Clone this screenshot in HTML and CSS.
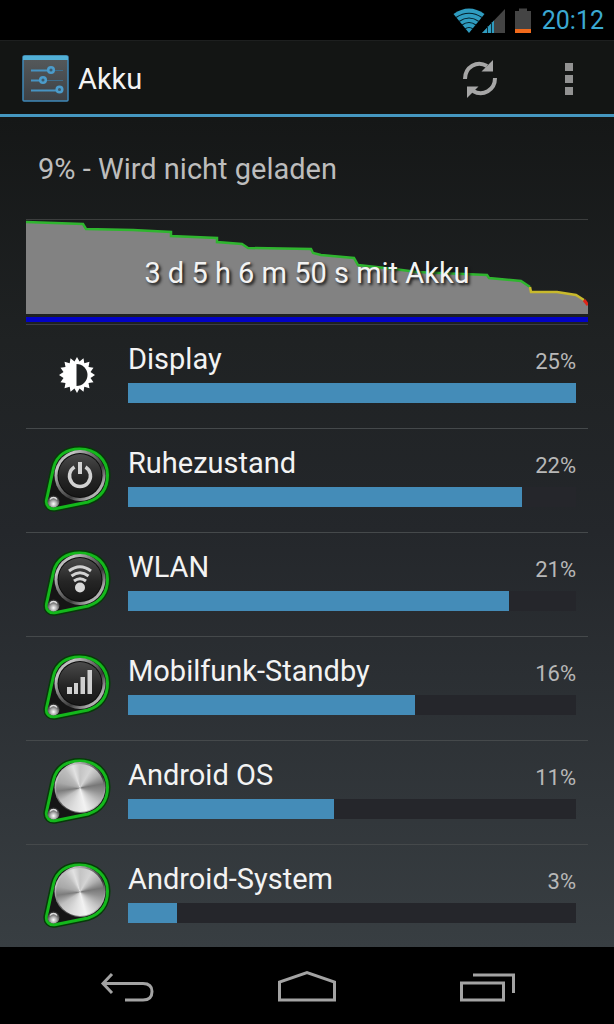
FILE: index.html
```html
<!DOCTYPE html>
<html lang="de">
<head>
	<meta charset="UTF-8">
	<meta name="viewport" content="width=device-width, initial-scale=1">
	<title>Akku</title>
	<link rel="stylesheet" href="styles.css">
</head>
<body>
	<!-- shared shapes -->
	<svg class="defs" width="0" height="0" aria-hidden="true">
		<defs>
			<linearGradient id="ring" x1="0" y1="0" x2="1" y2="1">
				<stop offset="0" stop-color="#8a8a8a"/>
				<stop offset=".2" stop-color="#c4c4c4"/>
				<stop offset=".4" stop-color="#777"/>
				<stop offset=".62" stop-color="#3a3a3a"/>
				<stop offset=".8" stop-color="#aaa"/>
				<stop offset="1" stop-color="#ddd"/>
			</linearGradient>
			<linearGradient id="face" x1="0" y1="0" x2="0" y2="1">
				<stop offset="0" stop-color="#4a4a4a"/>
				<stop offset=".55" stop-color="#252525"/>
				<stop offset="1" stop-color="#161616"/>
			</linearGradient>
			<radialGradient id="ball" cx=".5" cy=".7" r=".6">
				<stop offset="0" stop-color="#fff"/>
				<stop offset=".45" stop-color="#aaa"/>
				<stop offset="1" stop-color="#333"/>
			</radialGradient>
			<symbol id="badge" viewBox="0 0 68 68">
				<path d="M2.500 55 L9.500 23 C12.500 10 23 3 36.500 3 C53 3 65.500 14 65.500 30 C65.500 44 58 54 45 58 L13 64.500 C6 66 1.500 61 2.500 55 Z" fill="#111" stroke="#063c08" stroke-width="4"/>
				<path d="M3.500 55 L10.500 23 C13.500 10 24 4 36.500 4 C53 4 64.500 15 64.500 30 C64.500 44 57 53 45 57 L13 63.500 C7 65 2.500 61 3.500 55 Z" fill="#151515" stroke="#14b81c" stroke-width="3"/>
				<circle cx="37" cy="30.500" r="25.500" fill="url(#ring)"/>
				<circle cx="37" cy="30.500" r="22.500" fill="#0d0d0d"/>
				<circle cx="37" cy="30.500" r="21.500" fill="url(#face)"/>
				<circle cx="10.500" cy="56.500" r="6" fill="url(#ball)"/>
				<path d="M7 54.500 A4 4 0 0 1 14 54.500" fill="none" stroke="#ddd" stroke-width="1.500"/>
			</symbol>
		</defs>
	</svg>

	<div class="statusbar">
		<svg class="wifi" width="32" height="26" viewBox="0 0 32 26" role="img" aria-label="WLAN">
			<path d="M0.500 6 Q16 -5 31.500 6 L16 25 Z" fill="#2f9cc0"/>
			<path d="M3 9.500 Q16 1 29 9.500 M6 13.500 Q16 6.500 26 13.500 M9 17 Q16 12 23 17 M12 21 Q16 18 20 21" fill="none" stroke="#04202b" stroke-width="1.200"/>
		</svg>
		<svg class="signal" width="24" height="26" viewBox="0 0 24 26" role="img" aria-label="Mobilfunk">
			<path d="M0 25 L23 1 V25 Z" fill="#444"/>
			<path d="M0 25 L12 12.500 V25 Z" fill="#2f9cc0"/>
			<path d="M5.500 18 V25 M9.500 14 V25" stroke="#0b3240" stroke-width="1"/>
		</svg>
		<svg width="18" height="26" viewBox="0 0 18 26" role="img" aria-label="Batterie">
			<path d="M1 3 H5 V0.500 H13 V3 H17 V21 H1 Z" fill="#444"/>
			<path d="M1 21 H17 V25 H1 Z" fill="#f26a1b"/>
		</svg>
		<span class="clock">20:12</span>
	</div>

	<header class="actionbar">
		<svg class="appicon" width="48" height="48" viewBox="0 0 48 48" aria-hidden="true">
			<defs>
				<linearGradient id="panel" x1="0" y1="0" x2="0" y2="1">
					<stop offset="0" stop-color="#565a5c"/>
					<stop offset="1" stop-color="#3d4145"/>
				</linearGradient>
			</defs>
			<rect x="1" y="1" width="45" height="45" rx="1" fill="url(#panel)" stroke="#3f88b8" stroke-width="1.500"/>
			<path d="M1 2 Q1 0.500 3 0.500 H44 Q46 0.500 46 2 V5 H1 Z" fill="#52b0d6"/>
			<path d="M9 15.500 H26 M9 25.500 H18 M9 35.500 H35" stroke="#4793c2" stroke-width="2"/>
			<path d="M31 15.500 H41 M23 25.500 H41" stroke="#3d6d8b" stroke-width="1"/>
			<g fill="#3c5a6c" stroke="#4b9ccb" stroke-width="2.500">
				<circle cx="29" cy="15" r="2.800"/>
				<circle cx="21" cy="25" r="2.800"/>
				<circle cx="37.500" cy="34.500" r="2.800"/>
			</g>
		</svg>
		<h1 class="title">Akku</h1>
		<button class="action" type="button" aria-label="Aktualisieren">
			<svg width="38" height="40" viewBox="0 0 38 40" aria-hidden="true">
				<path d="M4 20 C4 8 16 1 26 7" fill="none" stroke="#a6a6a6" stroke-width="4"/>
				<path d="M32 1 V12.500 H20.500 Z" fill="#a6a6a6"/>
				<path d="M34 19 C34 31 22 38 12 32" fill="none" stroke="#a6a6a6" stroke-width="4"/>
				<path d="M6 39 V27.500 H17.500 Z" fill="#a6a6a6"/>
			</svg>
		</button>
		<button class="action menu" type="button" aria-label="Weitere Optionen">
			<svg width="10" height="34" viewBox="0 0 10 34" aria-hidden="true">
				<path d="M1 1 H9 V9 H1 Z M1 13 H9 V21 H1 Z M1 25 H9 V33 H1 Z" fill="#929292"/>
			</svg>
		</button>
	</header>

	<main class="content">
		<p class="summary">9% - Wird nicht geladen</p>

		<div class="chart">
			<svg class="graph" viewBox="0 0 562 104" preserveAspectRatio="none" aria-hidden="true">
				<path d="M0 2 L57 4 L60 9 L107 10 L145 12 V16 L191 18 V22 L216 24 L222 28 L285 29 L287 33 L295 35 L328 38 L332 45 L368 49 L391 52 L461 55 L463 58 L495 61 L504 67 L505 72 L531 72 L550 75 L558 80 L562 85 V94 H0 Z" fill="#828282"/>
				<g fill="none" stroke-width="2.500">
					<path d="M0 2 L57 4 L60 9 L107 10 L145 12 V16 L191 18 V22 L216 24 L222 28 L285 29 L287 33 L295 35 L328 38 L332 45 L368 49 L391 52 L461 55 L463 58 L495 61 L504 67" stroke="#2fb52f"/>
					<path d="M504 67 L505 72 L531 72 L550 75 L558 80" stroke="#c8b92c"/>
					<path d="M558 80 L562 85" stroke="#e0261a" stroke-width="3"/>
				</g>
				<path d="M0 97 H562 V102 H0 Z" fill="#0202c4"/>
			</svg>
			<span class="duration">3 d 5 h 6 m 50 s mit Akku</span>
		</div>

		<ul class="list">
			<li class="row">
				<svg class="icon" width="68" height="68" viewBox="0 0 68 68" aria-hidden="true">
					<path d="M34 16 L36.500 20.500 L40.500 17.200 L41.300 22.200 L46.500 20.800 L45.500 26 L50.500 26.800 L47.500 31 L52 34 L47.500 37 L50.500 41.200 L45.500 42 L46.500 47.200 L41.300 45.800 L40.500 50.800 L36.500 47.500 L34 52 L31.500 47.500 L27.500 50.800 L26.700 45.800 L21.500 47.200 L22.500 42 L17.500 41.200 L20.500 37 L16 34 L20.500 31 L17.500 26.800 L22.500 26 L21.500 20.800 L26.700 22.200 L27.500 17.200 L31.500 20.500 Z" fill="#fff"/>
					<path d="M33.500 23 A11 11 0 0 1 33.500 45 Z" fill="#202324"/>
				</svg>
				<div class="info">
					<div class="line"><span class="name">Display</span><span class="percent">25%</span></div>
					<div class="bar"><div class="fill" style="width: 100%"></div></div>
				</div>
			</li>
			<li class="row">
				<svg class="icon" width="68" height="68" viewBox="0 0 68 68" aria-hidden="true">
					<use href="#badge"/>
					<path d="M31.500 22 A10.500 10.500 0 1 0 42.500 22" fill="none" stroke="#d2d2d2" stroke-width="3.500"/>
					<path d="M37 17 V29" stroke="#d2d2d2" stroke-width="4"/>
				</svg>
				<div class="info">
					<div class="line"><span class="name">Ruhezustand</span><span class="percent">22%</span></div>
					<div class="bar"><div class="fill" style="width: 88%"></div></div>
				</div>
			</li>
			<li class="row">
				<svg class="icon" width="68" height="68" viewBox="0 0 68 68" aria-hidden="true">
					<use href="#badge"/>
					<circle cx="37" cy="38.500" r="5" fill="#d8d8d8"/>
					<path d="M26 22 Q37 13.500 48 22 M28.500 27 Q37 20.500 45.500 27 M31 32 Q37 27.500 43 32" fill="none" stroke="#d2d2d2" stroke-width="3"/>
				</svg>
				<div class="info">
					<div class="line"><span class="name">WLAN</span><span class="percent">21%</span></div>
					<div class="bar"><div class="fill" style="width: 85%"></div></div>
				</div>
			</li>
			<li class="row">
				<svg class="icon" width="68" height="68" viewBox="0 0 68 68" aria-hidden="true">
					<use href="#badge"/>
					<path d="M24 34 H29 V41 H24 Z M31 30 H35 V41 H31 Z M37.500 24 H42 V41 H37.500 Z M44.500 17 H49 V41 H44.500 Z" fill="#cfcfcf"/>
				</svg>
				<div class="info">
					<div class="line"><span class="name">Mobilfunk-Standby</span><span class="percent">16%</span></div>
					<div class="bar"><div class="fill" style="width: 64%"></div></div>
				</div>
			</li>
			<li class="row">
				<svg class="icon" width="68" height="68" viewBox="0 0 68 68" aria-hidden="true">
					<use href="#badge"/>
					<foreignObject x="13" y="7" width="48" height="48"><div class="metal"></div></foreignObject>
				</svg>
				<div class="info">
					<div class="line"><span class="name">Android OS</span><span class="percent">11%</span></div>
					<div class="bar"><div class="fill" style="width: 46%"></div></div>
				</div>
			</li>
			<li class="row">
				<svg class="icon" width="68" height="68" viewBox="0 0 68 68" aria-hidden="true">
					<use href="#badge"/>
					<foreignObject x="13" y="7" width="48" height="48"><div class="metal"></div></foreignObject>
				</svg>
				<div class="info">
					<div class="line"><span class="name">Android-System</span><span class="percent">3%</span></div>
					<div class="bar"><div class="fill" style="width: 11%"></div></div>
				</div>
			</li>
		</ul>
	</main>

	<nav class="navbar">
		<button type="button" aria-label="Zurück">
			<svg width="60" height="36" viewBox="0 0 60 36" aria-hidden="true">
				<path d="M15 4 L6 13.500 L15 23 M6 13.500 H46 Q55 13.500 55 21.500 Q55 30 46 30 H28" fill="none" stroke="#a3a3a3" stroke-width="3"/>
			</svg>
		</button>
		<button type="button" aria-label="Startseite">
			<svg width="60" height="36" viewBox="0 0 60 36" aria-hidden="true">
				<path d="M2.500 30 V12 L30 2.500 L57.500 12 V30 Z" fill="none" stroke="#a3a3a3" stroke-width="3"/>
			</svg>
		</button>
		<button type="button" aria-label="Letzte Apps">
			<svg width="60" height="36" viewBox="0 0 60 36" aria-hidden="true">
				<path d="M4.500 13 H46.500 V30 H4.500 Z M16 5 H56.500 V23" fill="none" stroke="#a3a3a3" stroke-width="3"/>
			</svg>
		</button>
	</nav>
</body>
</html>
```
FILE: styles.css
```css
*{
	margin: 0;
	padding: 0;
	box-sizing: border-box;
}
body{
	display: flex;
	flex-direction: column;
	height: 100vh;
	background: #000;
	color: #f3f3f3;
	font-family: Roboto, "Noto Sans", sans-serif;
	font-size: 29px;
	line-height: 36px;
}
svg{
	display: block;
}
.defs{
	position: absolute;
}
button{
	background: none;
	border: none;
	cursor: pointer;
}

/* status bar */
.statusbar{
	display: flex;
	align-items: center;
	justify-content: flex-end;
	flex: none;
	height: 40px;
	padding: 1px 10px 0 0;
	background: #000;
}
.statusbar .wifi{
	margin-right: -3px;
}
.statusbar .signal{
	margin-right: 8px;
}
.clock{
	margin-left: 10px;
	font-size: 25px;
	color: #3ba9d2;
}

/* action bar */
.actionbar{
	display: flex;
	align-items: center;
	flex: none;
	height: 77px;
	padding: 2px 20px 0 22px;
	background: #131514;
	border-top: 1px solid #1d1f1f;
	border-bottom: 3px solid #4597c0;
}
.title{
	flex: 1;
	margin-left: 8px;
	font-size: 29px;
	font-weight: 400;
}
.action{
	display: flex;
	justify-content: center;
	width: 50px;
}
.menu{
	margin-left: 39px;
}

/* content */
.content{
	flex: 1;
	min-height: 0;
	overflow: hidden;
	padding: 34px 26px 0;
	background: linear-gradient(#151717, #1f2223 27%, #24272b 50%, #383e42);
}
.summary{
	padding: 0 12px;
	color: #bdbdbd;
}
.chart{
	display: grid;
	align-items: center;
	justify-items: center;
	height: 106px;
	margin-top: 32px;
	border-top: 1px solid #3c3e3e;
	border-bottom: 1px solid #3c3e44;
}
.graph,.duration{
	grid-area: 1 / 1;
}
.graph{
	width: 100%;
	height: 104px;
}
.duration{
	padding-top: 2px;
	text-shadow: 2px 2px 3px #111;
}
.list{
	list-style: none;
}
.row{
	display: flex;
	align-items: center;
	height: 104px;
	border-bottom: 1px solid #45494b;
}
.icon{
	flex: none;
	margin: 0 17px 3px;
}
.metal{
	width: 48px;
	height: 48px;
	border-radius: 50%;
	background: conic-gradient(#c4c4c4, #d4d4d4 30deg, #b0b0b0 55deg, #777 80deg, #909090 100deg, #c4c4c4 130deg, #f2f2f2 165deg, #ddd 200deg, #c0c0c0 235deg, #7c7c7c 262deg, #a8a8a8 285deg, #bdbdbd 320deg, #e2e2e2 342deg, #c4c4c4);
}
.info{
	flex: 1;
	height: 100%;
	padding: 16px 12px 0 0;
}
.line{
	display: flex;
	align-items: baseline;
	justify-content: space-between;
}
.percent{
	font-size: 22px;
	color: #b8b8b8;
}
.bar{
	height: 20px;
	margin-top: 3px;
	background: #25262b;
}
.fill{
	height: 100%;
	background: #448cb8;
}

/* navigation */
.navbar{
	display: flex;
	align-items: center;
	justify-content: center;
	gap: 120px;
	flex: none;
	height: 77px;
	padding-top: 5px;
	background: #000;
}
```
